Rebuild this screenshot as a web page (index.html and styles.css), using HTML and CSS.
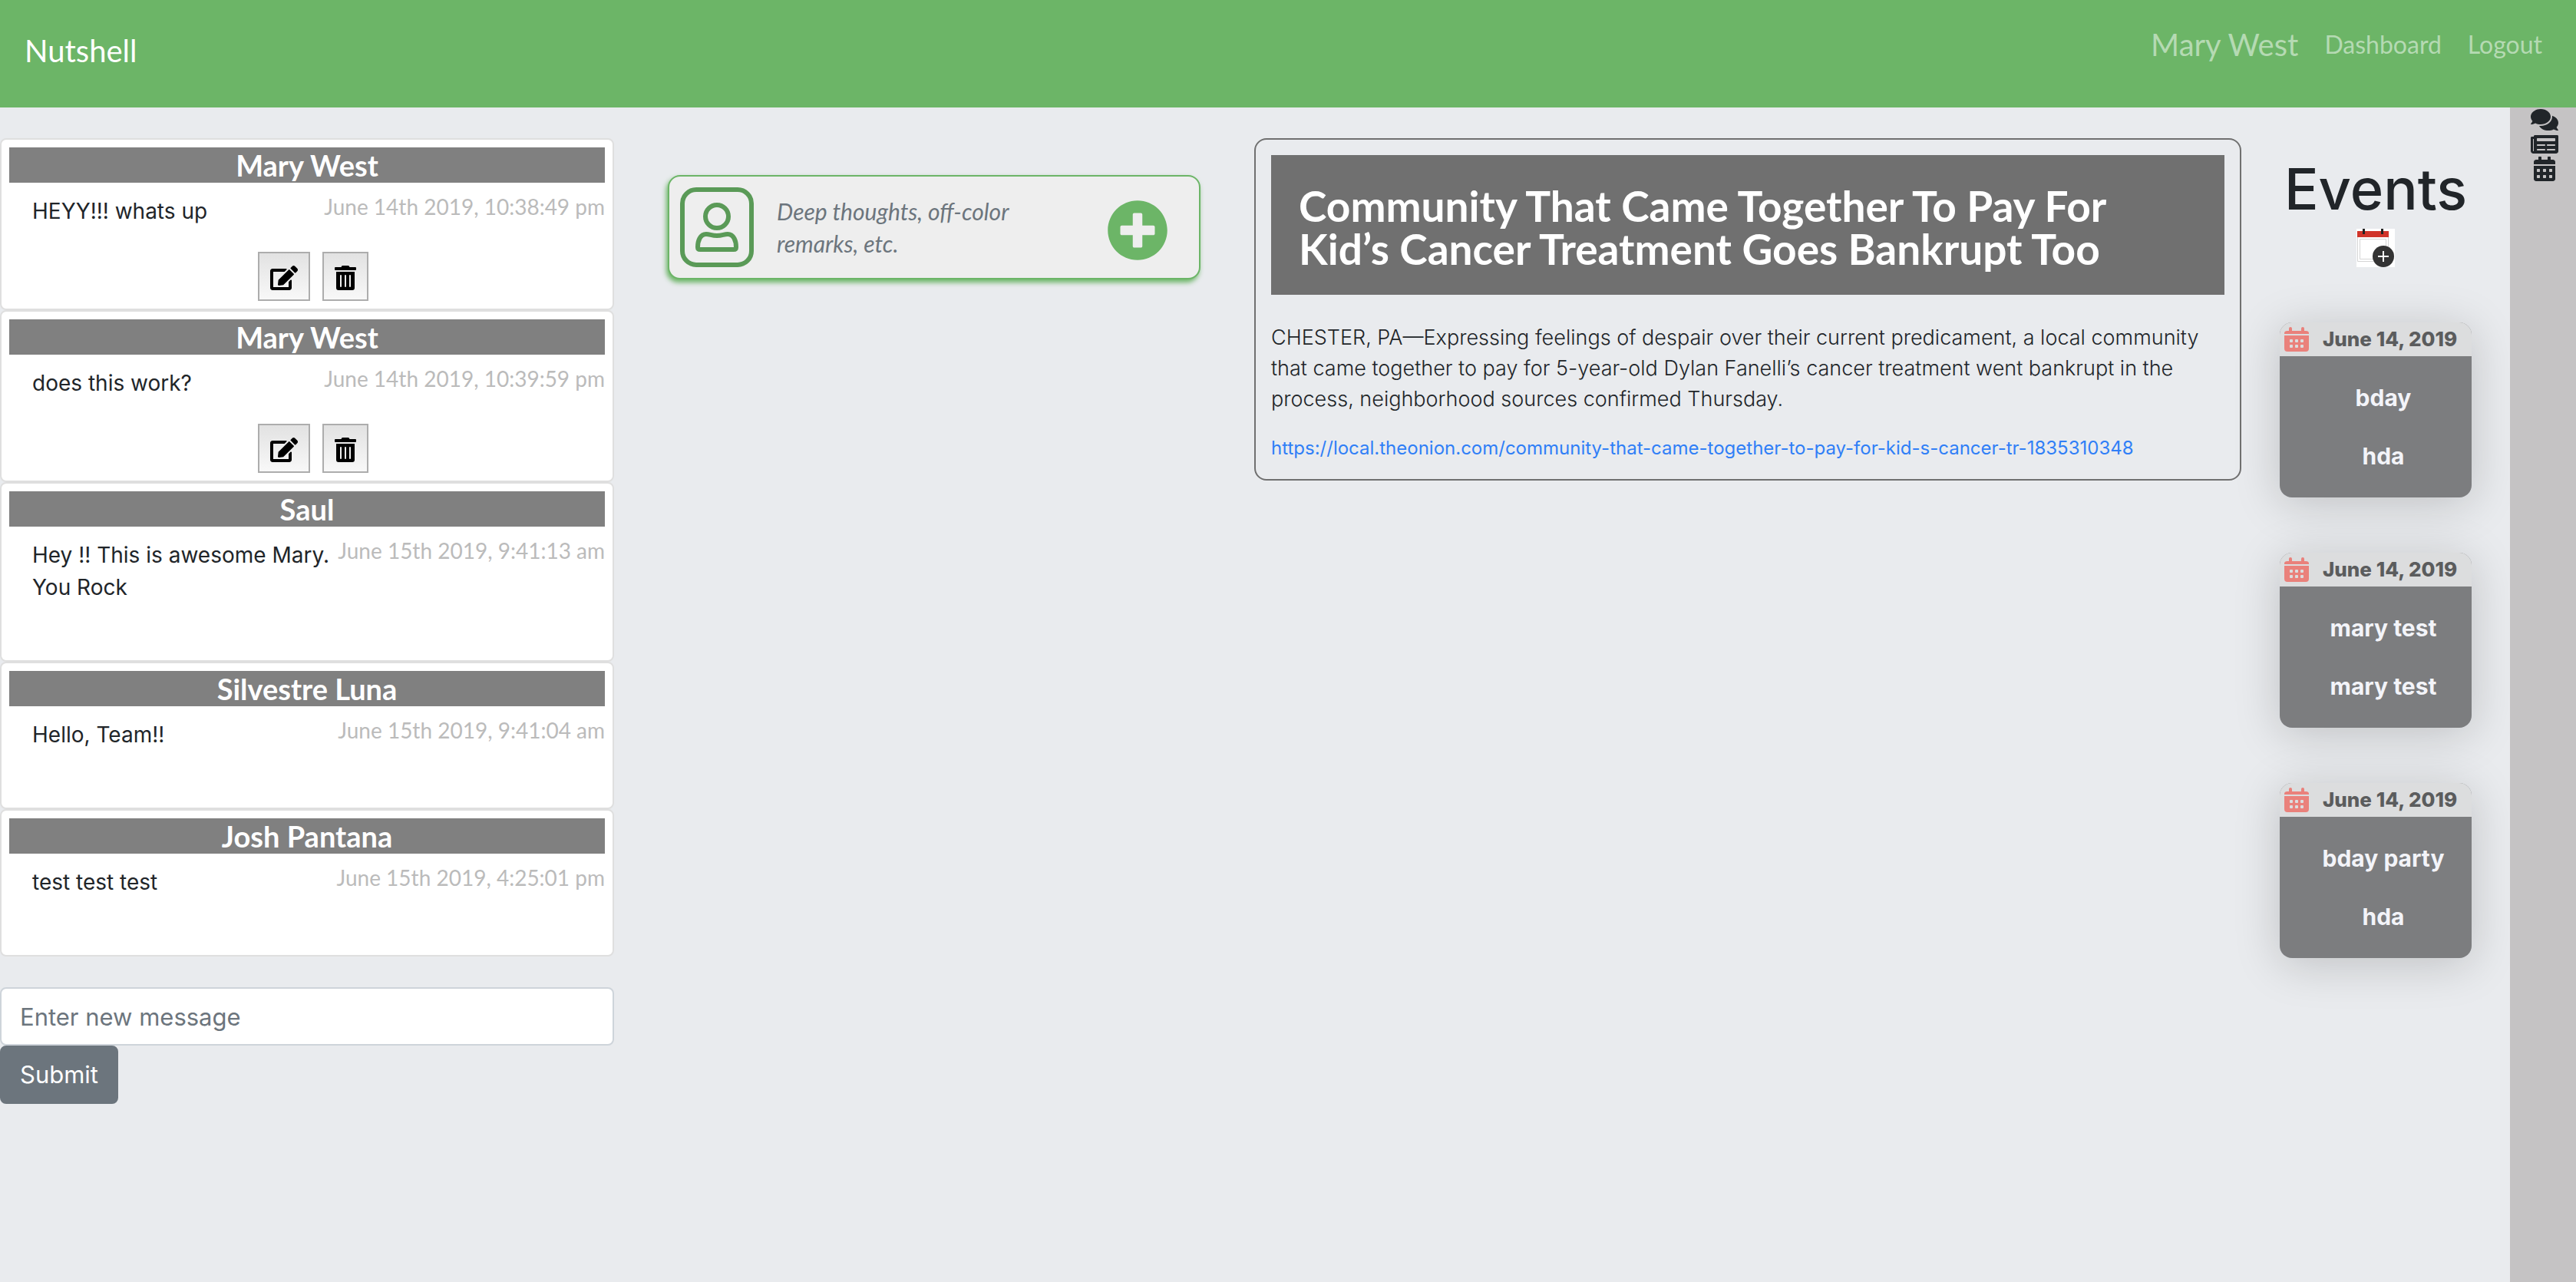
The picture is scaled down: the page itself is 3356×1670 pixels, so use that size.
FILE: index.html
```html
<!DOCTYPE html>
<html lang="en">
<head>
<meta charset="utf-8">
<title>Nutshell</title>
<link rel="stylesheet" href="styles.css">
</head>
<body>
<svg class="sprite" aria-hidden="true">
  <symbol id="i-comments" viewBox="0 0 576 512"><path d="M416 192c0-88.4-93.1-160-208-160S0 103.6 0 192c0 34.3 14.1 65.9 38 92-13.4 30.2-35.5 54.2-35.8 54.5-2.2 2.3-2.8 5.7-1.5 8.7S4.8 352 8 352c36.6 0 66.9-12.3 88.7-25 32.2 15.7 70.3 25 111.3 25 114.9 0 208-71.6 208-160zm122 220c23.9-26 38-57.7 38-92 0-66.9-53.5-124.2-129.3-148.1.9 6.6 1.3 13.3 1.3 20.1 0 105.9-107.7 192-240 192-10.8 0-21.3-.8-31.7-1.9C207.8 439.6 281.8 480 368 480c41 0 79.1-9.2 111.3-25 21.8 12.7 52.1 25 88.7 25 3.2 0 6.1-1.9 7.3-4.8 1.3-2.9.7-6.3-1.5-8.7-.3-.3-22.4-24.2-35.8-54.5z"/></symbol>
  <symbol id="i-news" viewBox="0 0 576 512"><path d="M552 64H88c-13.255 0-24 10.745-24 24v8H24c-13.255 0-24 10.745-24 24v272c0 30.928 25.072 56 56 56h472c26.51 0 48-21.49 48-48V88c0-13.255-10.745-24-24-24zM56 400a8 8 0 0 1-8-8V144h16v248a8 8 0 0 1-8 8zm236-16H140c-6.627 0-12-5.373-12-12v-8c0-6.627 5.373-12 12-12h152c6.627 0 12 5.373 12 12v8c0 6.627-5.373 12-12 12zm208 0H348c-6.627 0-12-5.373-12-12v-8c0-6.627 5.373-12 12-12h152c6.627 0 12 5.373 12 12v8c0 6.627-5.373 12-12 12zm-208-96H140c-6.627 0-12-5.373-12-12v-8c0-6.627 5.373-12 12-12h152c6.627 0 12 5.373 12 12v8c0 6.627-5.373 12-12 12zm208 0H348c-6.627 0-12-5.373-12-12v-8c0-6.627 5.373-12 12-12h152c6.627 0 12 5.373 12 12v8c0 6.627-5.373 12-12 12zm0-96H140c-6.627 0-12-5.373-12-12v-40c0-6.627 5.373-12 12-12h360c6.627 0 12 5.373 12 12v40c0 6.627-5.373 12-12 12z"/></symbol>
  <symbol id="i-calendar" viewBox="0 0 448 512"><path fill-rule="evenodd" d="M0 464c0 26.500 21.500 48 48 48h352c26.500 0 48-21.500 48-48V192H0zM76 256h40q12 0 12 12v40q0 12-12 12H76q-12 0-12-12v-40q0-12 12-12zM204 256h40q12 0 12 12v40q0 12-12 12h-40q-12 0-12-12v-40q0-12 12-12zM332 256h40q12 0 12 12v40q0 12-12 12h-40q-12 0-12-12v-40q0-12 12-12zM76 384h40q12 0 12 12v40q0 12-12 12H76q-12 0-12-12v-40q0-12 12-12zM204 384h40q12 0 12 12v40q0 12-12 12h-40q-12 0-12-12v-40q0-12 12-12zM332 384h40q12 0 12 12v40q0 12-12 12h-40q-12 0-12-12v-40q0-12 12-12zM400 64h-48V16c0-8.800-7.200-16-16-16h-32c-8.800 0-16 7.200-16 16v48H160V16c0-8.800-7.200-16-16-16h-32c-8.800 0-16 7.200-16 16v48H48C21.500 64 0 85.500 0 112v48h448v-48c0-26.500-21.500-48-48-48z"/></symbol>
  <symbol id="i-edit" viewBox="0 0 576 512"><path d="M402.6 83.2l90.2 90.2c3.8 3.8 3.8 10 0 13.8L274.4 405.6l-92.8 10.3c-12.4 1.4-22.9-9.1-21.5-21.5l10.3-92.8L388.8 83.2c3.8-3.8 10-3.8 13.8 0zm162-22.9l-48.8-48.8c-15.2-15.2-39.9-15.2-55.2 0l-35.4 35.4c-3.8 3.8-3.8 10 0 13.8l90.2 90.2c3.8 3.8 10 3.8 13.8 0l35.4-35.4c15.2-15.3 15.2-40 0-55.2zM384 346.2V448H64V128h229.8c3.2 0 6.2-1.3 8.5-3.5l40-40c7.6-7.6 2.2-20.5-8.5-20.5H48C21.5 64 0 85.5 0 112v352c0 26.5 21.5 48 48 48h352c26.5 0 48-21.5 48-48V306.2c0-10.7-12.9-16-20.5-8.5l-40 40c-2.2 2.3-3.5 5.3-3.5 8.5z"/></symbol>
  <symbol id="i-trash" viewBox="0 0 448 512"><path d="M32 464a48 48 0 0 0 48 48h288a48 48 0 0 0 48-48V128H32zm272-256a16 16 0 0 1 32 0v224a16 16 0 0 1-32 0zm-96 0a16 16 0 0 1 32 0v224a16 16 0 0 1-32 0zm-96 0a16 16 0 0 1 32 0v224a16 16 0 0 1-32 0zM432 32H312l-9.400-18.700A24 24 0 0 0 281.100 0H166.800a23.720 23.720 0 0 0-21.400 13.300L136 32H16A16 16 0 0 0 0 48v32a16 16 0 0 0 16 16h416a16 16 0 0 0 16-16V48a16 16 0 0 0-16-16z"/></symbol>
  <symbol id="i-plus" viewBox="0 0 512 512"><path d="M256 8C119 8 8 119 8 256s111 248 248 248 248-111 248-248S393 8 256 8zm144 276c0 6.6-5.4 12-12 12h-92v92c0 6.600-5.400 12-12 12h-56c-6.600 0-12-5.400-12-12v-92h-92c-6.600 0-12-5.400-12-12v-56c0-6.600 5.400-12 12-12h92v-92c0-6.600 5.400-12 12-12h56c6.600 0 12 5.400 12 12v92h92c6.600 0 12 5.400 12 12v56z"/></symbol>
  <symbol id="i-date" viewBox="0 0 32 32"><path fill-rule="evenodd" d="M0 11h32v17q0 4-4 4H4q-4 0-4-4zM8 16h2q1 0 1 1v2q0 1-1 1H8q-1 0-1-1v-2q0-1 1-1zM15 16h2q1 0 1 1v2q0 1-1 1h-2q-1 0-1-1v-2q0-1 1-1zM22 16h2q1 0 1 1v2q0 1-1 1h-2q-1 0-1-1v-2q0-1 1-1zM8 23h2q1 0 1 1v2q0 1-1 1H8q-1 0-1-1v-2q0-1 1-1zM15 23h2q1 0 1 1v2q0 1-1 1h-2q-1 0-1-1v-2q0-1 1-1zM22 23h2q1 0 1 1v2q0 1-1 1h-2q-1 0-1-1v-2q0-1 1-1zM0 9V8q0-3 4-3h2V2q0-2 2-2t2 2v3h12V2q0-2 2-2t2 2v3h2q4 0 4 3v1z"/></symbol>
</svg>

<header class="navbar">
  <a class="brand" href="#">Nutshell</a>
  <nav class="nav-links">
    <a class="user" href="#">Mary West</a>
    <a href="#">Dashboard</a>
    <a href="#">Logout</a>
  </nav>
</header>

<div class="layout">
  <main class="columns">
    <section class="messages" aria-label="Messages">
      <article class="message">
        <h2>Mary West</h2>
        <div class="message-row"><p>HEYY!!! whats up</p><time>June 14th 2019, 10:38:49 pm</time></div>
        <div class="actions">
          <button type="button" aria-label="Edit"><svg class="icon wide"><use href="#i-edit"/></svg></button>
          <button type="button" aria-label="Delete"><svg class="icon"><use href="#i-trash"/></svg></button>
        </div>
      </article>
      <article class="message">
        <h2>Mary West</h2>
        <div class="message-row"><p>does this work?</p><time>June 14th 2019, 10:39:59 pm</time></div>
        <div class="actions">
          <button type="button" aria-label="Edit"><svg class="icon wide"><use href="#i-edit"/></svg></button>
          <button type="button" aria-label="Delete"><svg class="icon"><use href="#i-trash"/></svg></button>
        </div>
      </article>
      <article class="message plain">
        <h2>Saul</h2>
        <div class="message-row"><p>Hey !! This is awesome Mary. You Rock</p><time>June 15th 2019, 9:41:13 am</time></div>
      </article>
      <article class="message plain">
        <h2>Silvestre Luna</h2>
        <div class="message-row"><p>Hello, Team!!</p><time>June 15th 2019, 9:41:04 am</time></div>
      </article>
      <article class="message plain">
        <h2>Josh Pantana</h2>
        <div class="message-row"><p>test test test</p><time>June 15th 2019, 4:25:01 pm</time></div>
      </article>
      <form class="composer">
        <input type="text" placeholder="Enter new message" aria-label="Enter new message">
        <button type="submit">Submit</button>
      </form>
    </section>

    <section class="friends" aria-label="Friends">
      <div class="thought">
        <svg class="avatar" viewBox="0 0 96 104" fill="none" stroke="#5a9a57" stroke-width="6">
          <rect x="3" y="3" width="90" height="98" rx="18"/>
          <circle cx="48" cy="38" r="15"/>
          <path d="M34 61C26 61 23 70 23 78q0 3 3 3h44q3 0 3-3c0-8-3-17-11-17-5 0-7 2-14 2s-9-2-14-2z"/>
        </svg>
        <p>Deep thoughts, off-color remarks, etc.</p>
        <button type="button" class="add" aria-label="Add"><svg class="icon-plus"><use href="#i-plus"/></svg></button>
      </div>
    </section>

    <section class="news" aria-label="News">
      <article class="article">
        <h1>Community That Came Together To Pay For Kid’s Cancer Treatment Goes Bankrupt Too</h1>
        <p>CHESTER, PA—Expressing feelings of despair over their current predicament, a local community that came together to pay for 5-year-old Dylan Fanelli’s cancer treatment went bankrupt in the process, neighborhood sources confirmed Thursday.</p>
        <a href="#">https://local.theonion.com/community-that-came-together-to-pay-for-kid-s-cancer-tr-1835310348</a>
      </article>
    </section>

    <section class="events">
      <h1>Events</h1>
      <button type="button" class="add-event" aria-label="Add event">
        <svg viewBox="0 0 50 50" width="50" height="50">
          <path fill="#fff" d="M0 0h50v50H0z"/>
          <path fill="none" stroke="#d5d5d5" d="M1.500 11v31.500h40V11M4.500 13.500h34v26h-34z"/>
          <path fill="#d0342a" d="M1 3h41v8H1z"/>
          <path fill="#222" d="M8 0h3v7H8zM32 0h3v7h-3z"/>
          <circle cx="35" cy="36" r="14" fill="#333"/>
          <path stroke="#fff" stroke-width="2" d="M28 36h14M35 29v14"/>
        </svg>
      </button>
      <article class="event">
        <h2><svg class="icon-date"><use href="#i-date"/></svg><span>June 14, 2019</span></h2>
        <ul><li>bday</li><li>hda</li></ul>
      </article>
      <article class="event">
        <h2><svg class="icon-date"><use href="#i-date"/></svg><span>June 14, 2019</span></h2>
        <ul><li>mary test</li><li>mary test</li></ul>
      </article>
      <article class="event">
        <h2><svg class="icon-date"><use href="#i-date"/></svg><span>June 14, 2019</span></h2>
        <ul><li>bday party</li><li>hda</li></ul>
      </article>
    </section>
  </main>

  <aside class="rail">
    <a href="#" aria-label="Messages"><svg class="icon wide"><use href="#i-comments"/></svg></a>
    <a href="#" aria-label="News"><svg class="icon wide"><use href="#i-news"/></svg></a>
    <a href="#" aria-label="Events"><svg class="icon"><use href="#i-calendar"/></svg></a>
  </aside>
</div>
</body>
</html>
```
FILE: styles.css
```css
* { box-sizing: border-box; }

body {
  margin: 0;
  min-height: 100vh;
  display: flex;
  flex-direction: column;
  background: #e9ebee;
  color: #212529;
  font: 28px/42px Inter, sans-serif;
}

h1, h2, p, ul { margin: 0; padding: 0; }
a { text-decoration: none; }
button { margin: 0; font: inherit; cursor: pointer; }
svg { display: block; }

.sprite { position: absolute; width: 0; height: 0; }
.icon { width: 28px; height: 32px; fill: currentColor; }
.icon.wide { width: 36px; }

.navbar {
  display: flex;
  justify-content: space-between;
  align-items: flex-start;
  height: 140px;
  padding: 28px 44px 0 32px;
  background: #6cb567;
  font-family: Lato, sans-serif;
}
.brand { padding-top: 8px; font-size: 40px; line-height: 60px; color: #fff; }
.nav-links { display: flex; align-items: center; gap: 34px; }
.nav-links a { font-size: 32px; line-height: 60px; color: #b5dab3; }
.nav-links .user { font-size: 40px; }

.layout { flex: 1; display: flex; }
.columns {
  flex: 1;
  display: grid;
  grid-template-columns: 800fr 834fr 1286fr 350fr;
  align-items: start;
  padding-top: 40px;
}

.message {
  padding: 10px;
  border: 2px solid #dfdfdf;
  border-radius: 8px;
  background: #fff;
}
.message.plain { padding-bottom: 74px; }
.message h2 {
  background: #808080;
  color: #fff;
  font: 700 38px/46px Lato, sans-serif;
  text-align: center;
}
.message-row { display: flex; justify-content: space-between; align-items: flex-start; }
.message-row p { padding: 16px 0 0 30px; }
.message-row time {
  flex: none;
  padding-top: 10px;
  color: #bbb;
  font-family: Lato, sans-serif;
  font-size: 28px;
}
.actions { display: flex; justify-content: center; gap: 16px; padding: 32px 0 0 16px; }
.actions button {
  height: 64px;
  padding: 4px 14px 0;
  border: 2px solid #adadad;
  background: linear-gradient(#e2e2e2, #f8f8f8);
  color: #000;
}

.composer { padding-top: 40px; }
.composer input {
  display: block;
  width: 100%;
  height: 76px;
  padding: 0 24px;
  border: 2px solid #ced4da;
  border-radius: 8px;
  background: #fff;
  font: 31px/48px Inter, sans-serif;
}
.composer input::placeholder { color: #6c757d; opacity: 1; }
.composer button {
  height: 76px;
  padding: 0 24px;
  border: 2px solid #6c757d;
  border-radius: 8px;
  background: #6c757d;
  color: #fff;
  font-size: 31px;
}

.friends { padding: 48px 70px 0; }
.thought {
  display: flex;
  align-items: center;
  height: 136px;
  padding: 0 40px 0 14px;
  border: 2px solid #6cb567;
  border-radius: 16px;
  background: #eee;
  box-shadow: -2px 4px 6px #6cb567;
}
.avatar { flex: none; width: 96px; height: 104px; }
.thought p { flex: 1; padding: 0 90px 0 30px; color: #6c757d; font: italic 30px/42px Lato, sans-serif; }
.add { margin-top: 8px; padding: 0; border: 0; background: none; color: #6cb567; }
.icon-plus { width: 80px; height: 80px; fill: currentColor; }

.article {
  padding: 20px;
  border: 2px solid #707070;
  border-radius: 16px;
}
.article h1 {
  padding: 38px 36px 32px;
  background: #707070;
  color: #fff;
  font: 700 55px/56px Lato, sans-serif;
}
.article p { padding-top: 36px; font-size: 27px; line-height: 40px; font-weight: 300; }
.article a { display: block; padding-top: 24px; color: #307ff7; font-size: 24px; line-height: 40px; }

.events { display: flex; flex-direction: column; align-items: center; padding: 18px 0 0; }
.events h1 { font-size: 74px; line-height: 96px; font-weight: 500; }
.add-event { margin: 4px 0 72px; padding: 0; border: 0; background: none; }
.event {
  width: 250px;
  margin-bottom: 72px;
  border-radius: 16px;
  overflow: hidden;
  background: #7c7d7f;
  box-shadow: 0 8px 60px rgba(0, 0, 0, .18);
}
.event h2 {
  display: flex;
  align-items: center;
  gap: 18px;
  height: 44px;
  padding: 0 6px;
  background: #dcddde;
  color: #5b5c5d;
  font-size: 26px;
  font-weight: 800;
  white-space: nowrap;
}
.icon-date { flex: none; width: 32px; height: 32px; fill: #ea817b; }
.event ul {
  height: 184px;
  padding: 16px 0 0 20px;
  list-style: none;
  color: #f3f4f9;
  text-align: center;
  font-size: 30px;
  line-height: 76px;
  font-weight: 700;
}

.rail { width: 86px; padding-left: 4px; background: #c5c3c4; }
.rail a { display: flex; justify-content: center; color: #212529; }
```
